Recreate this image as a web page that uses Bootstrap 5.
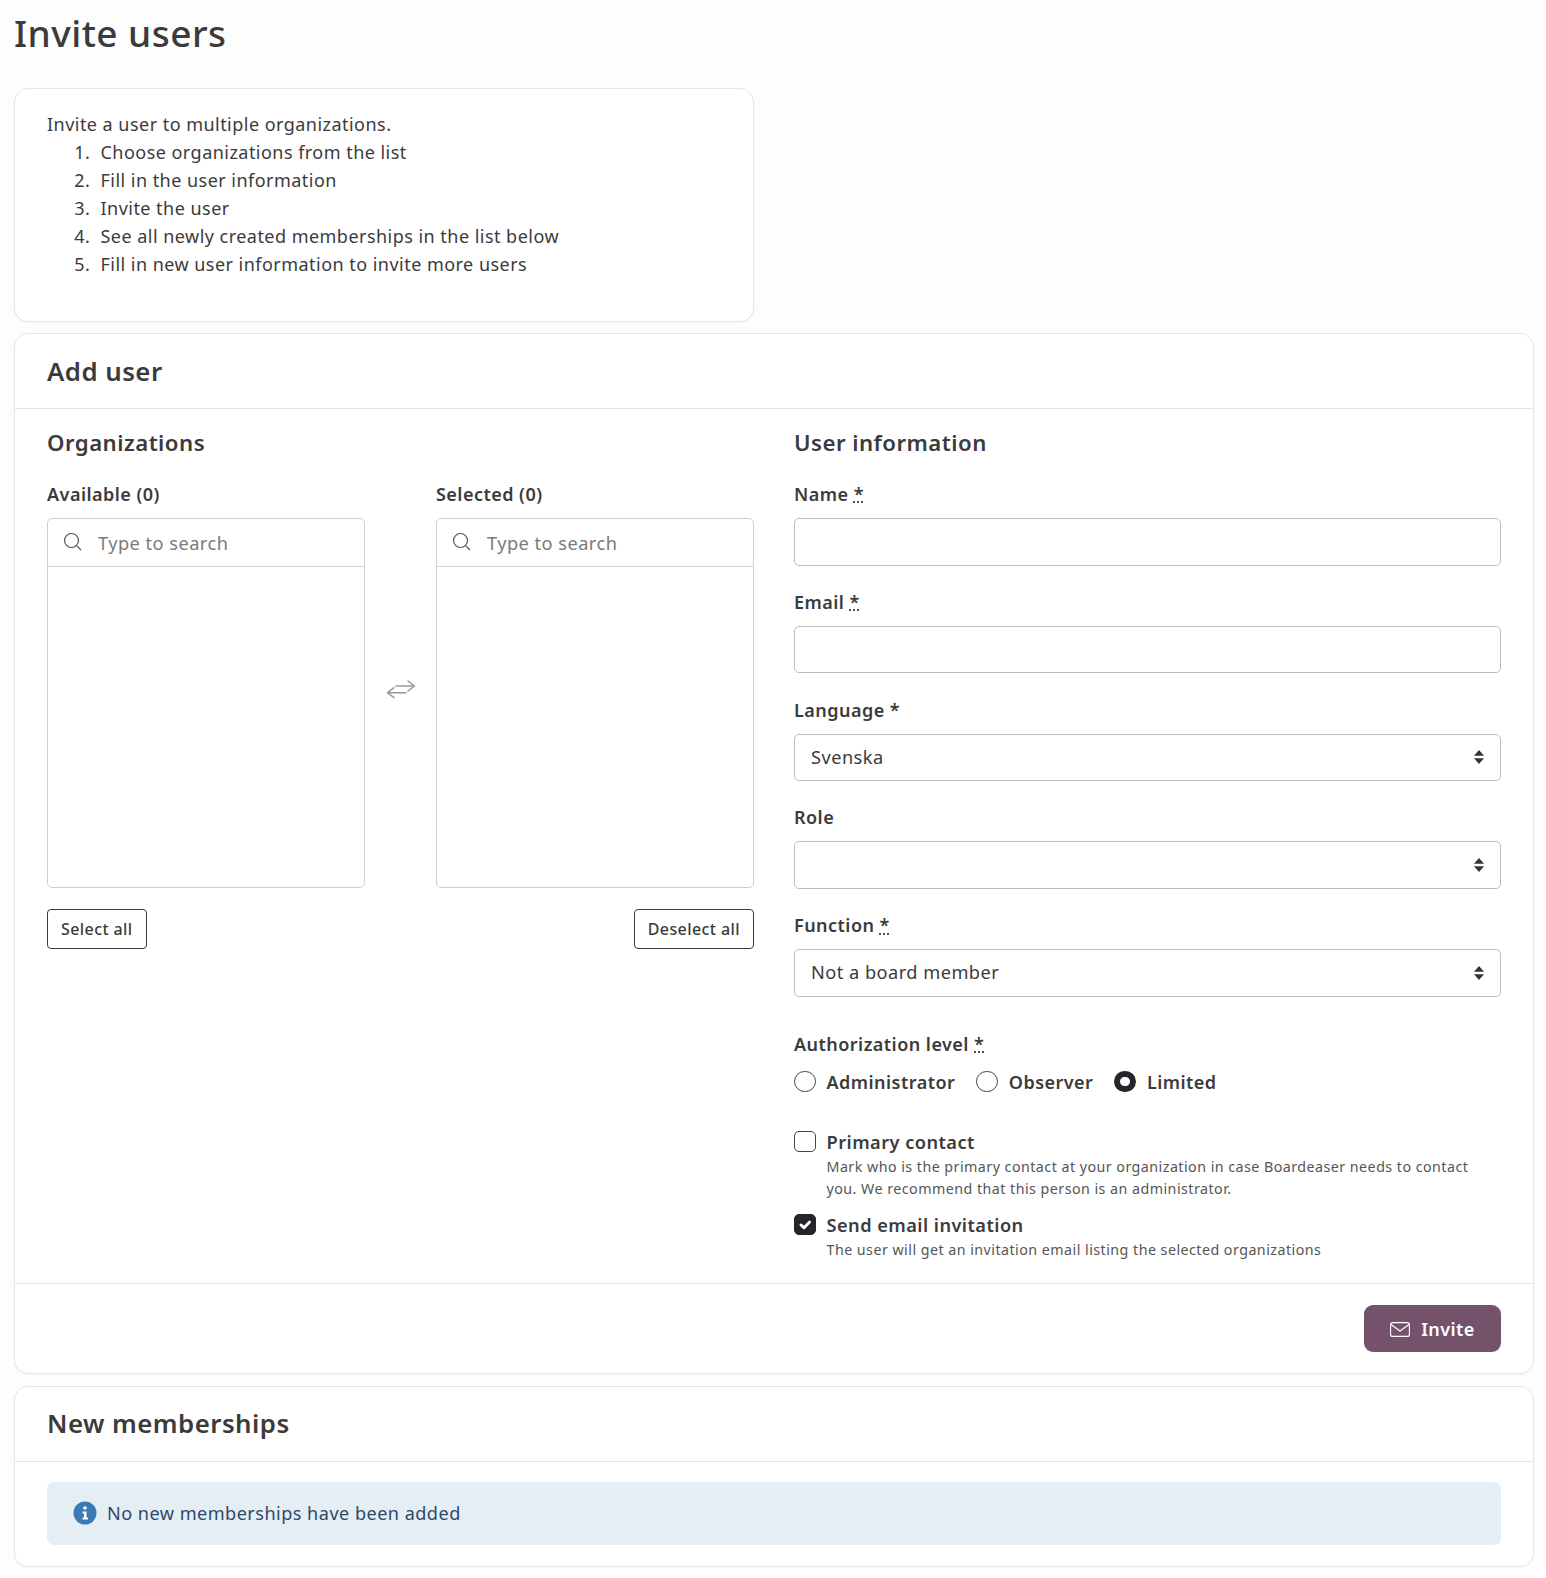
<!DOCTYPE html>
<html lang="en">
<head>
<meta charset="utf-8">
<title>Invite users</title>
<link href="https://cdn.jsdelivr.net/npm/bootstrap@5.3.0/dist/css/bootstrap.min.css" rel="stylesheet">
<style>
:root{--ink:#3b3b3b;--edge:#bdbdbd;--track:.026em;}
html,body{height:100%;}
body{background:#fdfdfd;color:var(--ink);font-family:"Noto Sans","Open Sans",sans-serif;font-size:18px;line-height:28.1px;letter-spacing:var(--track);}
.page-wrap{padding:0 12px 12px 14px;}
.page-title{font-size:37px;line-height:46px;font-weight:500;margin:0;padding:10px 0 32px;color:var(--ink);}
.panel{border:1px solid #e6e6e6;border-radius:14px;background:#fff;box-shadow:0 1px 2px rgba(0,0,0,.04);}
.intro-panel{width:740px;height:234px;padding:21px 32px;margin-bottom:11px;}
.intro-panel ol{margin:0;padding-left:53.5px;}
.intro-panel li::marker{content:counter(list-item) ".  ";}
.panel-head{height:75px;display:flex;align-items:center;padding:0 32px;border-bottom:1px solid #e2e2e2;}
.panel-head h2{font-size:25.8px;font-weight:600;margin:0;color:var(--ink);}
.sec-title{font-size:22.2px;font-weight:600;line-height:28px;margin:-1px 0 23px;color:var(--ink);}
.add-body{padding:21px 32px 22px;}
.two-col{display:grid;grid-template-columns:1fr 1fr;gap:40px;}
.fld-label{display:block;font-weight:600;font-size:18px;line-height:28px;margin-bottom:10px;}
.fld-group{margin-bottom:22.3px;}
.fld-label abbr{text-decoration:underline dotted;}
.form-control.field,.form-select.field{height:47.5px;border:1px solid var(--edge);border-radius:5px;font-size:18.2px;color:var(--ink);padding:0 16px;letter-spacing:var(--track);}
.form-select.field{background-image:url("data:image/svg+xml,%3Csvg xmlns='http://www.w3.org/2000/svg' viewBox='0 0 12 16'%3E%3Cpath fill='%23333' d='M6 1l5 5.700H1zM6 15l5-5.700H1z'/%3E%3C/svg%3E");background-size:12px 16px;background-position:right 15.5px center;}
.picker-row{display:grid;grid-template-columns:318px 1fr 318px;}
.picker{height:370px;border:1px solid #cfcfcf;border-radius:5px;}
.picker-search{height:48px;display:flex;align-items:center;gap:15px;padding:2px 15px 0;border-bottom:1px solid #d5d5d5;color:#7a7a7a;font-size:18.2px;}
.picker-search svg{margin-top:-3px;}
.swap{display:flex;align-items:center;justify-content:center;height:370px;padding-bottom:28px;}
.btn-row{display:flex;justify-content:space-between;margin-top:21px;}
.btn-plain{height:40px;border:1px solid #3b3b3b;border-radius:4px;font-size:16px;font-weight:500;color:var(--ink);padding:0 13px;background:#fff;letter-spacing:var(--track);}
.auth-group{margin-top:33px;}
.auth-group .fld-label{margin-bottom:7px;}
.radio-line{display:flex;gap:21px;height:34px;align-items:center;}
.opt{display:flex;align-items:center;gap:11px;font-weight:600;font-size:18px;margin:0;}
.opt input{appearance:none;width:21.5px;height:21.5px;border:1px solid #444;border-radius:50%;background:#fff;margin:0;flex:none;}
.opt input:checked{border:6px solid #26262a;}
.checks{margin-top:30px;}
.chk{display:grid;grid-template-columns:21.5px 1fr;column-gap:11px;margin-bottom:12px;}
.chk-box{appearance:none;width:21.5px;height:21.5px;border:1px solid #444;border-radius:5px;margin:2px 0 0;display:block;background:#fff;}
.chk-box:checked{background-color:#26262a;border-color:#26262a;background-image:url("data:image/svg+xml,%3Csvg xmlns='http://www.w3.org/2000/svg' viewBox='0 0 20 20'%3E%3Cpath fill='none' stroke='%23fff' stroke-linecap='round' stroke-linejoin='round' stroke-width='3' d='M6 10.500l3 3 5.500-6'/%3E%3C/svg%3E");background-size:100%;}
.chk-title{font-weight:600;font-size:18.2px;line-height:27px;}
.chk-note{font-size:14.25px;line-height:22px;color:#555;}
.panel-foot{border-top:1px solid #e2e2e2;padding:21px 32px;display:flex;justify-content:flex-end;}
.btn-invite{height:47px;width:137px;border:0;border-radius:9px;background:#75526b;color:#fff;font-size:18px;font-weight:600;display:flex;align-items:center;justify-content:center;gap:11px;letter-spacing:var(--track);padding:2px 0 0;}
.btn-invite:hover{background:#75526b;color:#fff;}
.mem-panel{margin-top:12px;}
.mem-body{padding:20px 32px 21px;}
.note-box{height:63px;display:flex;align-items:center;gap:10px;padding:0 26px;border-radius:7px;background:#e6eef5;color:#2b4a69;margin:0;border:0;font-size:18.1px;}
</style>
</head>
<body>
<div class="page-wrap">
  <h1 class="page-title">Invite users</h1>
  <div class="panel intro-panel">
    Invite a user to multiple organizations.
    <ol>
      <li>Choose organizations from the list</li>
      <li>Fill in the user information</li>
      <li>Invite the user</li>
      <li>See all newly created memberships in the list below</li>
      <li>Fill in new user information to invite more users</li>
    </ol>
  </div>

  <div class="panel">
    <div class="panel-head"><h2>Add user</h2></div>
    <div class="add-body two-col">
      <div>
        <h3 class="sec-title">Organizations</h3>
        <div class="picker-row">
          <div>
            <span class="fld-label">Available (0)</span>
            <div class="picker">
              <div class="picker-search">
                <svg width="20" height="20" viewBox="0 0 20 20" fill="none" stroke="#555" stroke-width="1.2"><circle cx="8.500" cy="8.500" r="7"/><path d="M13.600 13.600 18 18"/></svg>
                <span>Type to search</span>
              </div>
            </div>
          </div>
          <div class="d-flex flex-column">
            <span class="fld-label">&nbsp;</span>
            <div class="swap">
              <svg width="30" height="20" viewBox="0 0 30 20" fill="none" stroke="#999" stroke-width="1.5" stroke-linecap="round" stroke-linejoin="round"><path d="M10 7H28.500M22 2l6.500 5L22 12M20 13.700H1.500M8 8.700l-6.500 5 6.500 5"/></svg>
            </div>
          </div>
          <div>
            <span class="fld-label">Selected (0)</span>
            <div class="picker">
              <div class="picker-search">
                <svg width="20" height="20" viewBox="0 0 20 20" fill="none" stroke="#555" stroke-width="1.2"><circle cx="8.500" cy="8.500" r="7"/><path d="M13.600 13.600 18 18"/></svg>
                <span>Type to search</span>
              </div>
            </div>
          </div>
        </div>
        <div class="btn-row">
          <button type="button" class="btn btn-plain">Select all</button>
          <button type="button" class="btn btn-plain">Deselect all</button>
        </div>
      </div>
      <div>
        <h3 class="sec-title">User information</h3>
        <div class="fld-group"><label class="fld-label">Name <abbr title="required">*</abbr></label><input class="form-control field" type="text"></div>
        <div class="fld-group"><label class="fld-label">Email <abbr title="required">*</abbr></label><input class="form-control field" type="email"></div>
        <div class="fld-group"><label class="fld-label">Language *</label><select class="form-select field"><option>Svenska</option></select></div>
        <div class="fld-group"><label class="fld-label">Role</label><select class="form-select field"><option></option></select></div>
        <div class="fld-group mb-0"><label class="fld-label">Function <abbr title="required">*</abbr></label><select class="form-select field"><option>Not a board member</option></select></div>
        <div class="auth-group">
          <span class="fld-label">Authorization level <abbr title="required">*</abbr></span>
          <div class="radio-line">
            <label class="opt"><input type="radio" name="lvl">Administrator</label>
            <label class="opt"><input type="radio" name="lvl">Observer</label>
            <label class="opt"><input type="radio" name="lvl" checked>Limited</label>
          </div>
        </div>
        <div class="checks">
          <div class="chk">
            <input class="chk-box" type="checkbox" id="c1">
            <div><label class="chk-title d-block" for="c1">Primary contact</label>
            <div class="chk-note">Mark who is the primary contact at your organization in case Boardeaser needs to contact you. We recommend that this person is an administrator.</div></div>
          </div>
          <div class="chk mb-0">
            <input class="chk-box" type="checkbox" id="c2" checked>
            <div><label class="chk-title d-block" for="c2">Send email invitation</label>
            <div class="chk-note">The user will get an invitation email listing the selected organizations</div></div>
          </div>
        </div>
      </div>
    </div>
    <div class="panel-foot">
      <button type="button" class="btn btn-invite">
        <svg width="20" height="15" viewBox="0 0 20 15" fill="none" stroke="#fff" stroke-width="1.1"><rect x=".6" y=".6" width="18.800" height="13.800" rx="2"/><path d="M1 2.500 10 9l9-6.500"/></svg>
        Invite
      </button>
    </div>
  </div>

  <div class="panel mem-panel">
    <div class="panel-head"><h2>New memberships</h2></div>
    <div class="mem-body">
      <div class="alert note-box">
        <svg width="24" height="24" viewBox="0 0 24 24"><circle cx="12" cy="12" r="11.500" fill="#3d79b3"/><circle cx="12" cy="7" r="1.800" fill="#fff"/><path d="M9.500 10.500h4v6h1.500v2H9.500v-2H11v-4H9.500z" fill="#fff"/></svg>
        No new memberships have been added
      </div>
    </div>
  </div>
</div>
<script src="https://cdn.jsdelivr.net/npm/bootstrap@5.3.0/dist/js/bootstrap.bundle.min.js"></script>
</body>
</html>
